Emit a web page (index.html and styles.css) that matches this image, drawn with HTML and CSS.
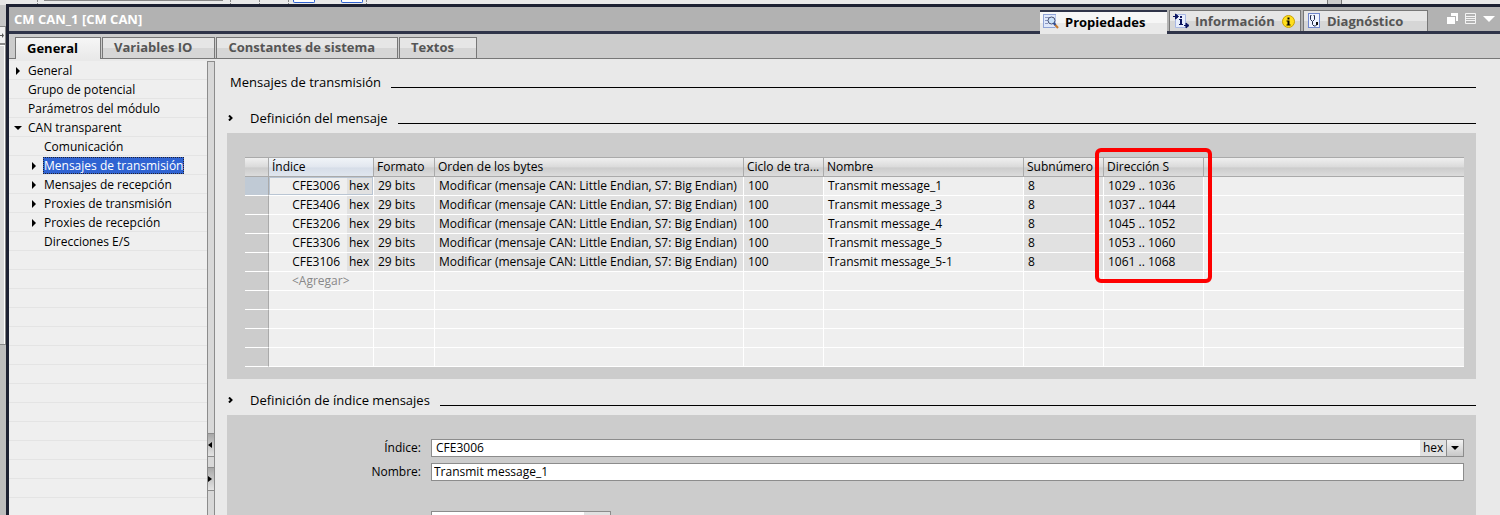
FILE: index.html
```html
<!DOCTYPE html>
<html lang="es">
  <head>
    <meta charset="UTF-8" />
    <meta name="viewport" content="width=device-width, initial-scale=1.0" />
    <title>CM CAN_1 [CM CAN]</title>
    <link rel="stylesheet" href="styles.css">
  </head>
  <body>
    <div class="dock">
      <div class="dock-gap"></div>
      <button class="dock-button" aria-label="Expandir">
        <svg width="4" height="5" viewBox="0 0 4 5"><path d="M0 2h2V0l2 2.5L2 5V3H0z" fill="#555" /></svg>
      </button>
      <div class="dock-panel"></div>
    </div>

    <div class="workspace">
      <div class="toolbar">
        <i class="dots"></i>
        <i class="combo"></i>
        <i class="dots"></i>
        <i class="dots"></i>
        <i class="dots"></i>
        <i class="toggle"></i>
        <i class="toggle second"></i>
        <i class="dots near"></i>
        <i class="scroll"></i>
      </div>

      <main class="inspector">
        <header class="titlebar">
          <h1>CM CAN_1 [CM CAN]</h1>
          <nav class="view-tabs">
            <button class="view-tab active">
              <svg width="16" height="16" viewBox="0 0 16 16">
                <rect x="0.5" y="0.5" width="12" height="13" fill="#dfe8fb" stroke="#8fa3d6" />
                <path d="M2 3.5h4M2 6.5h3M2 9.5h3" stroke="#8a97c0" />
                <path d="M12.5 1v13" stroke="#b9c8ee" />
                <circle cx="8.5" cy="6.5" r="3.5" fill="#c9e2fa" stroke="#4a5070" />
                <path d="M11.5 10l3.500 4" stroke="#c77a2e" stroke-width="2" />
                <path d="M10.5 9l2 2" stroke="#2b4f9c" stroke-width="2" />
              </svg>
              Propiedades
            </button>
            <button class="view-tab">
              <svg width="16" height="16" viewBox="0 0 16 16">
                <path d="M2.5 1.5h10v13h-10z" fill="#e8eefc" stroke="#a9b8e4" />
                <path d="M0 3.5h4M2.5 1l3 2.5-3 2.5z" stroke="#0b1560" fill="#0b1560" />
                <path d="M7 3h2v2H7zM6 6h3v5h1v1H6v-1h1V7H6z" fill="#0b1560" />
                <path d="M11 12.5h3M13 10l3 2.5-3 2.5z" stroke="#0b1560" fill="#0b1560" />
              </svg>
              Información
              <svg class="badge" width="13" height="13" viewBox="0 0 13 13">
                <circle cx="6.5" cy="6.5" r="6" fill="#ffdf1c" stroke="#c9a000" />
                <path d="M5.5 2.5h2v2h-2zM4.5 5.5h3v4h1v1h-4v-1h1v-3h-1z" fill="#000" />
              </svg>
            </button>
            <button class="view-tab">
              <svg width="14" height="16" viewBox="0 0 14 16">
                <rect x="1.5" y="0.5" width="11" height="14" fill="#eef3ff" stroke="#6f86cc" />
                <path d="M4.5 2.5H3.500v4l2 2 2-2v-4h-1M5.500 8.500v3l1.500 1.500h1.500l1-1" fill="none" stroke="#222c4c" />
                <rect x="9" y="9" width="2" height="3" fill="#111" />
              </svg>
              Diagnóstico
            </button>
          </nav>
          <div class="window-buttons">
            <button aria-label="Flotante">
              <svg width="12" height="12" viewBox="0 0 12 12"><path d="M4 0h7v8H9V3H4z" fill="#fff" /><path d="M0 4h8v7H0z" fill="#fff" /></svg>
            </button>
            <button aria-label="Organizar">
              <svg width="12" height="12" viewBox="0 0 12 12"><path d="M.5.5h10v10H.5zM1 3.5h9M1 5.5h9M1 7.5h9" fill="none" stroke="#f4f4f4" /></svg>
            </button>
            <button aria-label="Contraer">
              <svg width="12" height="12" viewBox="0 0 12 12"><path d="M0 3h12L6 9z" fill="#fff" /></svg>
            </button>
          </div>
        </header>

        <nav class="page-tabs">
          <button class="page-tab active">General</button>
          <button class="page-tab">Variables IO</button>
          <button class="page-tab">Constantes de sistema</button>
          <button class="page-tab">Textos</button>
        </nav>

        <div class="body">
          <ul class="tree">
            <li><svg width="6" height="8" viewBox="0 0 6 8"><path d="M1 0l4 4-4 4z" /></svg><a href="#">General</a></li>
            <li><a href="#">Grupo de potencial</a></li>
            <li><a href="#">Parámetros del módulo</a></li>
            <li><svg width="8" height="4" viewBox="0 0 8 4"><path d="M0 0h8L4 4z" /></svg><a href="#">CAN transparent</a></li>
            <li class="child"><a href="#">Comunicación</a></li>
            <li class="child"><svg width="6" height="8" viewBox="0 0 6 8"><path d="M1 0l4 4-4 4z" /></svg><a class="selected" href="#">Mensajes de transmisión</a></li>
            <li class="child"><svg width="6" height="8" viewBox="0 0 6 8"><path d="M1 0l4 4-4 4z" /></svg><a href="#">Mensajes de recepción</a></li>
            <li class="child"><svg width="6" height="8" viewBox="0 0 6 8"><path d="M1 0l4 4-4 4z" /></svg><a href="#">Proxies de transmisión</a></li>
            <li class="child"><svg width="6" height="8" viewBox="0 0 6 8"><path d="M1 0l4 4-4 4z" /></svg><a href="#">Proxies de recepción</a></li>
            <li class="child"><a href="#">Direcciones E/S</a></li>
          </ul>

          <div class="splitter">
            <button aria-label="Contraer a la izquierda"><svg width="4" height="6" viewBox="0 0 4 6"><path d="M4 0v6L0 3z" /></svg></button>
            <button aria-label="Expandir a la derecha"><svg width="4" height="6" viewBox="0 0 4 6"><path d="M0 0v6l4-3z" /></svg></button>
          </div>

          <div class="content">
            <h2 class="heading">Mensajes de transmisión</h2>

            <h3 class="heading sub">
              <svg width="5" height="6" viewBox="0 0 5 6"><path d="M1 .5L3.5 3 1 5.5" /></svg>
              Definición del mensaje
            </h3>
            <div class="panel">
              <table class="messages">
                <colgroup>
                  <col class="w-mark"><col class="w-index"><col class="w-format"><col class="w-order"><col class="w-cycle"><col class="w-name"><col class="w-sub"><col class="w-address"><col>
                </colgroup>
                <thead>
                  <tr>
                    <th></th>
                    <th class="sorted">Índice</th>
                    <th>Formato</th>
                    <th>Orden de los bytes</th>
                    <th>Ciclo de tra...</th>
                    <th>Nombre</th>
                    <th>Subnúmero</th>
                    <th class="address">Dirección S<span class="highlight"></span></th>
                    <th></th>
                  </tr>
                </thead>
                <tbody>
                  <tr class="current"><td></td><td class="index"><div>CFE3006<span>hex</span></div></td><td class="ro">29 bits</td><td class="ro">Modificar (mensaje CAN: Little Endian, S7: Big Endian)</td><td class="ro">100</td><td>Transmit message_1</td><td class="ro">8</td><td class="ro">1029 .. 1036</td><td></td></tr>
                  <tr><td></td><td class="index"><div>CFE3406<span>hex</span></div></td><td class="ro">29 bits</td><td class="ro">Modificar (mensaje CAN: Little Endian, S7: Big Endian)</td><td class="ro">100</td><td>Transmit message_3</td><td class="ro">8</td><td class="ro">1037 .. 1044</td><td></td></tr>
                  <tr><td></td><td class="index"><div>CFE3206<span>hex</span></div></td><td class="ro">29 bits</td><td class="ro">Modificar (mensaje CAN: Little Endian, S7: Big Endian)</td><td class="ro">100</td><td>Transmit message_4</td><td class="ro">8</td><td class="ro">1045 .. 1052</td><td></td></tr>
                  <tr><td></td><td class="index"><div>CFE3306<span>hex</span></div></td><td class="ro">29 bits</td><td class="ro">Modificar (mensaje CAN: Little Endian, S7: Big Endian)</td><td class="ro">100</td><td>Transmit message_5</td><td class="ro">8</td><td class="ro">1053 .. 1060</td><td></td></tr>
                  <tr><td></td><td class="index"><div>CFE3106<span>hex</span></div></td><td class="ro">29 bits</td><td class="ro">Modificar (mensaje CAN: Little Endian, S7: Big Endian)</td><td class="ro">100</td><td>Transmit message_5-1</td><td class="ro">8</td><td class="ro">1061 .. 1068</td><td></td></tr>
                  <tr><td></td><td class="add">&lt;Agregar&gt;</td><td></td><td></td><td></td><td></td><td></td><td></td><td></td></tr>
                  <tr><td></td><td></td><td></td><td></td><td></td><td></td><td></td><td></td><td></td></tr>
                  <tr><td></td><td></td><td></td><td></td><td></td><td></td><td></td><td></td><td></td></tr>
                  <tr><td></td><td></td><td></td><td></td><td></td><td></td><td></td><td></td><td></td></tr>
                  <tr><td></td><td></td><td></td><td></td><td></td><td></td><td></td><td></td><td></td></tr>
                </tbody>
              </table>
            </div>

            <h3 class="heading sub">
              <svg width="5" height="6" viewBox="0 0 5 6"><path d="M1 .5L3.5 3 1 5.5" /></svg>
              Definición de índice mensajes
            </h3>
            <div class="panel form">
              <label for="indice">Índice:</label>
              <div class="field">
                <input class="indented" type="text" id="indice" value="CFE3006" />
                <span class="unit">hex</span>
                <button class="drop" aria-label="Formato de número"><svg width="8" height="4" viewBox="0 0 8 4"><path d="M0 0h8L4 4z" /></svg></button>
              </div>
              <label for="nombre">Nombre:</label>
              <div class="field">
                <input type="text" id="nombre" value="Transmit message_1" />
              </div>
              <div class="field short">
                <input type="text" aria-label="Subnúmero" />
                <span class="unit"></span>
              </div>
            </div>
          </div>
        </div>
      </main>
    </div>
  </body>
</html>
```
FILE: styles.css
```css
* {
  box-sizing: border-box;
}
body {
  margin: 0;
  height: 100vh;
  display: flex;
  overflow: hidden;
  background: #e9e9e9;
  color: #000;
  font-family: "Open Sans", "Noto Sans", sans-serif;
  font-size: 12px;
  line-height: 18px;
}
button {
  border: 0;
  padding: 0;
  margin: 0;
  background: none;
  color: inherit;
  font: inherit;
}
a {
  color: inherit;
  text-decoration: none;
}
svg {
  display: block;
  flex: none;
}

/* left dock */
.dock {
  width: 6px;
  flex: none;
  display: flex;
  flex-direction: column;
  background: #bdbdbd;
}
.dock-gap {
  height: 26px;
  border-top: 5px solid #e6e6e6;
  background: #c6c6c6;
}
.dock-button {
  height: 18px;
  border: solid #888;
  border-width: 1px 1px 1px 0;
  background: #f0f0f0;
}
.dock-panel {
  height: 301px;
  border: solid #888;
  border-width: 1px 1px 1px 0;
  background: #d8d8d8;
  box-shadow: inset -1px 1px #fff;
}

.workspace {
  flex: 1;
  min-width: 0;
  display: flex;
  flex-direction: column;
}
.toolbar {
  height: 4px;
  flex: none;
  display: flex;
  background: #e9e9e9;
}
.dots {
  width: 1px;
  margin-right: 28px;
  border-left: 1px dotted #888;
}
.dots:first-child {
  margin: 0 6px 0 31px;
}
.dots.near {
  margin: 0 0 0 3px;
}
.combo {
  width: 179px;
  height: 1px;
  margin-right: 7px;
  background: #888;
}
.toggle {
  width: 22px;
  height: 3px;
  margin-left: -24px;
  border: solid #2f62d0;
  border-width: 0 1px 1px;
  border-radius: 0 0 2px 2px;
  background: #fff;
}
.toggle.second {
  margin-left: 26px;
}
.scroll {
  width: 15px;
  margin: 0 158px 0 auto;
  border: solid #777;
  border-width: 0 1px;
  background: #ccc;
}

.inspector {
  flex: 1;
  min-height: 0;
  display: flex;
  flex-direction: column;
  border: solid #1d2132;
  border-width: 3px 0 0 3px;
}
.titlebar {
  height: 27px;
  flex: none;
  display: flex;
  padding-top: 3px;
  border-bottom: 3px solid #2f3449;
  background: #b2b2b2;
}
h1 {
  flex: 1;
  margin: 0;
  padding-left: 5px;
  color: #fff;
  font-size: 13px;
  line-height: 18px;
}
.view-tabs {
  display: flex;
  gap: 2px;
  height: 21px;
  font-size: 13px;
  font-weight: bold;
  color: #555;
}
.view-tab {
  display: flex;
  align-items: center;
  gap: 6px;
  width: 125px;
  padding-left: 3px;
  border: 1px solid #777;
  border-bottom: 0;
  background: linear-gradient(#e6e6e6 50%, #d6d6d6 50%);
}
.view-tab:nth-child(2) {
  width: 132px;
}
.view-tab .badge {
  margin-left: auto;
  margin-right: 5px;
}
.view-tab.active {
  width: 127px;
  height: 24px;
  padding-bottom: 3px;
  border: 0;
  border-top: 2px solid #2f3449;
  background: linear-gradient(#f6f6f6 50%, #e9e9e9 50%);
  color: #000;
}
.window-buttons {
  display: flex;
  align-items: flex-start;
  gap: 6px;
  padding: 3px 5px 0 19px;
}

.page-tabs {
  height: 25px;
  flex: none;
  display: flex;
  gap: 1px;
  padding: 3px 0 0 6px;
  border-bottom: 1px solid #777;
  background: #ccc;
}
.page-tab {
  padding: 0 22px 2px 11px;
  border: 1px solid #777;
  border-bottom: 0;
  background: linear-gradient(#e6e6e6 50%, #d6d6d6 50%);
  color: #555;
  font-size: 13px;
  font-weight: bold;
}
.page-tab.active {
  height: 22px;
  background: linear-gradient(#f6f6f6, #e9e9e9);
  color: #000;
}

.body {
  flex: 1;
  min-height: 0;
  display: flex;
}

/* navigation tree */
.tree {
  width: 198px;
  flex: none;
  margin: 2px 0 0;
  padding: 0;
  list-style: none;
  background: repeating-linear-gradient(#efefef 0 18px, #e4e4e4 18px 19px);
}
.tree li {
  height: 19px;
  display: flex;
  align-items: center;
  padding-left: 4px;
}
.tree li.child {
  padding-left: 20px;
}
.tree a {
  padding: 0 1px;
  line-height: 17px;
}
.tree li a:only-child {
  margin-left: 14px;
}
.tree svg {
  width: 10px;
  margin-right: 4px;
}
.tree .selected {
  outline: 1px dotted #223;
  outline-offset: -1px;
  background: #2f63d2;
  color: #fff;
}

.splitter {
  width: 8px;
  flex: none;
  margin-top: 2px;
  padding-top: 371px;
  display: flex;
  flex-direction: column;
  gap: 10px;
  border: 1px solid #8c8c8c;
  border-bottom: 0;
  background: #d8d8d8;
  overflow: hidden;
}
.splitter button {
  height: 24px;
  display: flex;
  align-items: center;
  border: solid #8c8c8c;
  border-width: 1px 0;
  background: linear-gradient(#a8a8a8, #e4e4e4);
}

.content {
  flex: 1;
  min-width: 0;
  padding: 14px 24px 0 12px;
  overflow: hidden;
}
.heading {
  margin: 0 0 18px;
  padding-left: 3px;
  display: flex;
  align-items: center;
  font-size: 13px;
  font-weight: normal;
  line-height: 18px;
}
.heading::after {
  content: "";
  flex: 1;
  margin: 11px 0 0 10px;
  border-top: 1px solid #000;
}
.heading.sub {
  margin: 0 0 6px;
  padding-left: 1px;
}
.heading svg {
  margin-right: 17px;
  fill: none;
  stroke: #000;
  stroke-width: 2px;
}
.panel {
  padding: 24px 12px 12px 18px;
  background: #ccc;
}
.panel + .heading {
  margin-top: 12px;
}

/* message table */
.messages {
  width: 100%;
  table-layout: fixed;
  border-collapse: separate;
  border-spacing: 0;
}
.w-mark {
  width: 24px;
}
.w-index {
  width: 105px;
}
.w-format {
  width: 61px;
}
.w-order {
  width: 309px;
}
.w-cycle,
.w-sub {
  width: 80px;
}
.w-name {
  width: 200px;
}
.w-address {
  width: 100px;
}
.messages th {
  height: 20px;
  padding: 0 3px;
  border: solid #aaa;
  border-width: 1px 1px 1px 0;
  background: linear-gradient(#f0f0f0, #dadada 50%, #cccccc 55%, #dcdcdc);
  font-weight: normal;
  text-align: left;
  white-space: nowrap;
}
.messages th.sorted {
  background: linear-gradient(#f0f4f8, #e2e7ef 50%, #d6dde8 55%, #e0e6ee);
}
.messages th:last-child,
.messages td:last-child {
  border-right: 0;
}
.messages td {
  height: 19px;
  padding: 0 3px 0 4px;
  border: solid #fff;
  border-width: 0 1px 1px 0;
  background: #efefef;
  white-space: nowrap;
}
.messages td:first-child {
  border-right-color: #aaa;
  background: #ccc;
}
.messages td.ro {
  background: #e1e1e1;
}
.messages td.index {
  padding: 0;
}
.index div {
  height: 18px;
  display: flex;
  justify-content: flex-end;
}
.index span {
  width: 26px;
  margin-left: 7px;
  padding-left: 2px;
  background: #e1e1e1;
}
.messages .current td:first-child {
  background: #c0cad5;
}
.current .index div {
  outline: 1px solid #b9c5d3;
  outline-offset: -1px;
}
.messages td.add {
  padding-left: 23px;
  color: #888;
}
.address {
  position: relative;
}
.highlight {
  position: absolute;
  top: -10px;
  left: -9px;
  width: 117px;
  height: 135px;
  border: 4px solid #fe0000;
  border-radius: 6px;
}

/* index form */
.form {
  display: grid;
  grid-template-columns: 176px 1fr;
  grid-auto-rows: 18px;
  gap: 6px 10px;
  min-height: 200px;
}
.form label {
  text-align: right;
}
.field {
  display: flex;
  border: 1px solid #8c8c8c;
  background: #fff;
}
.field input {
  flex: 1;
  min-width: 0;
  border: 0;
  padding: 0 2px;
  background: none;
  font: inherit;
}
.field input.indented {
  padding-left: 4px;
}
.unit {
  width: 26px;
  padding-left: 3px;
  background: #e1e1e1;
  line-height: 16px;
}
.drop {
  width: 17px;
  display: flex;
  align-items: center;
  justify-content: center;
  border-left: 1px solid #8c8c8c;
  background: linear-gradient(#f4f4f4, #c8c8c8);
}
.field.short {
  grid-column: 2;
  width: 180px;
  margin-top: 24px;
  height: 18px;
}
```
